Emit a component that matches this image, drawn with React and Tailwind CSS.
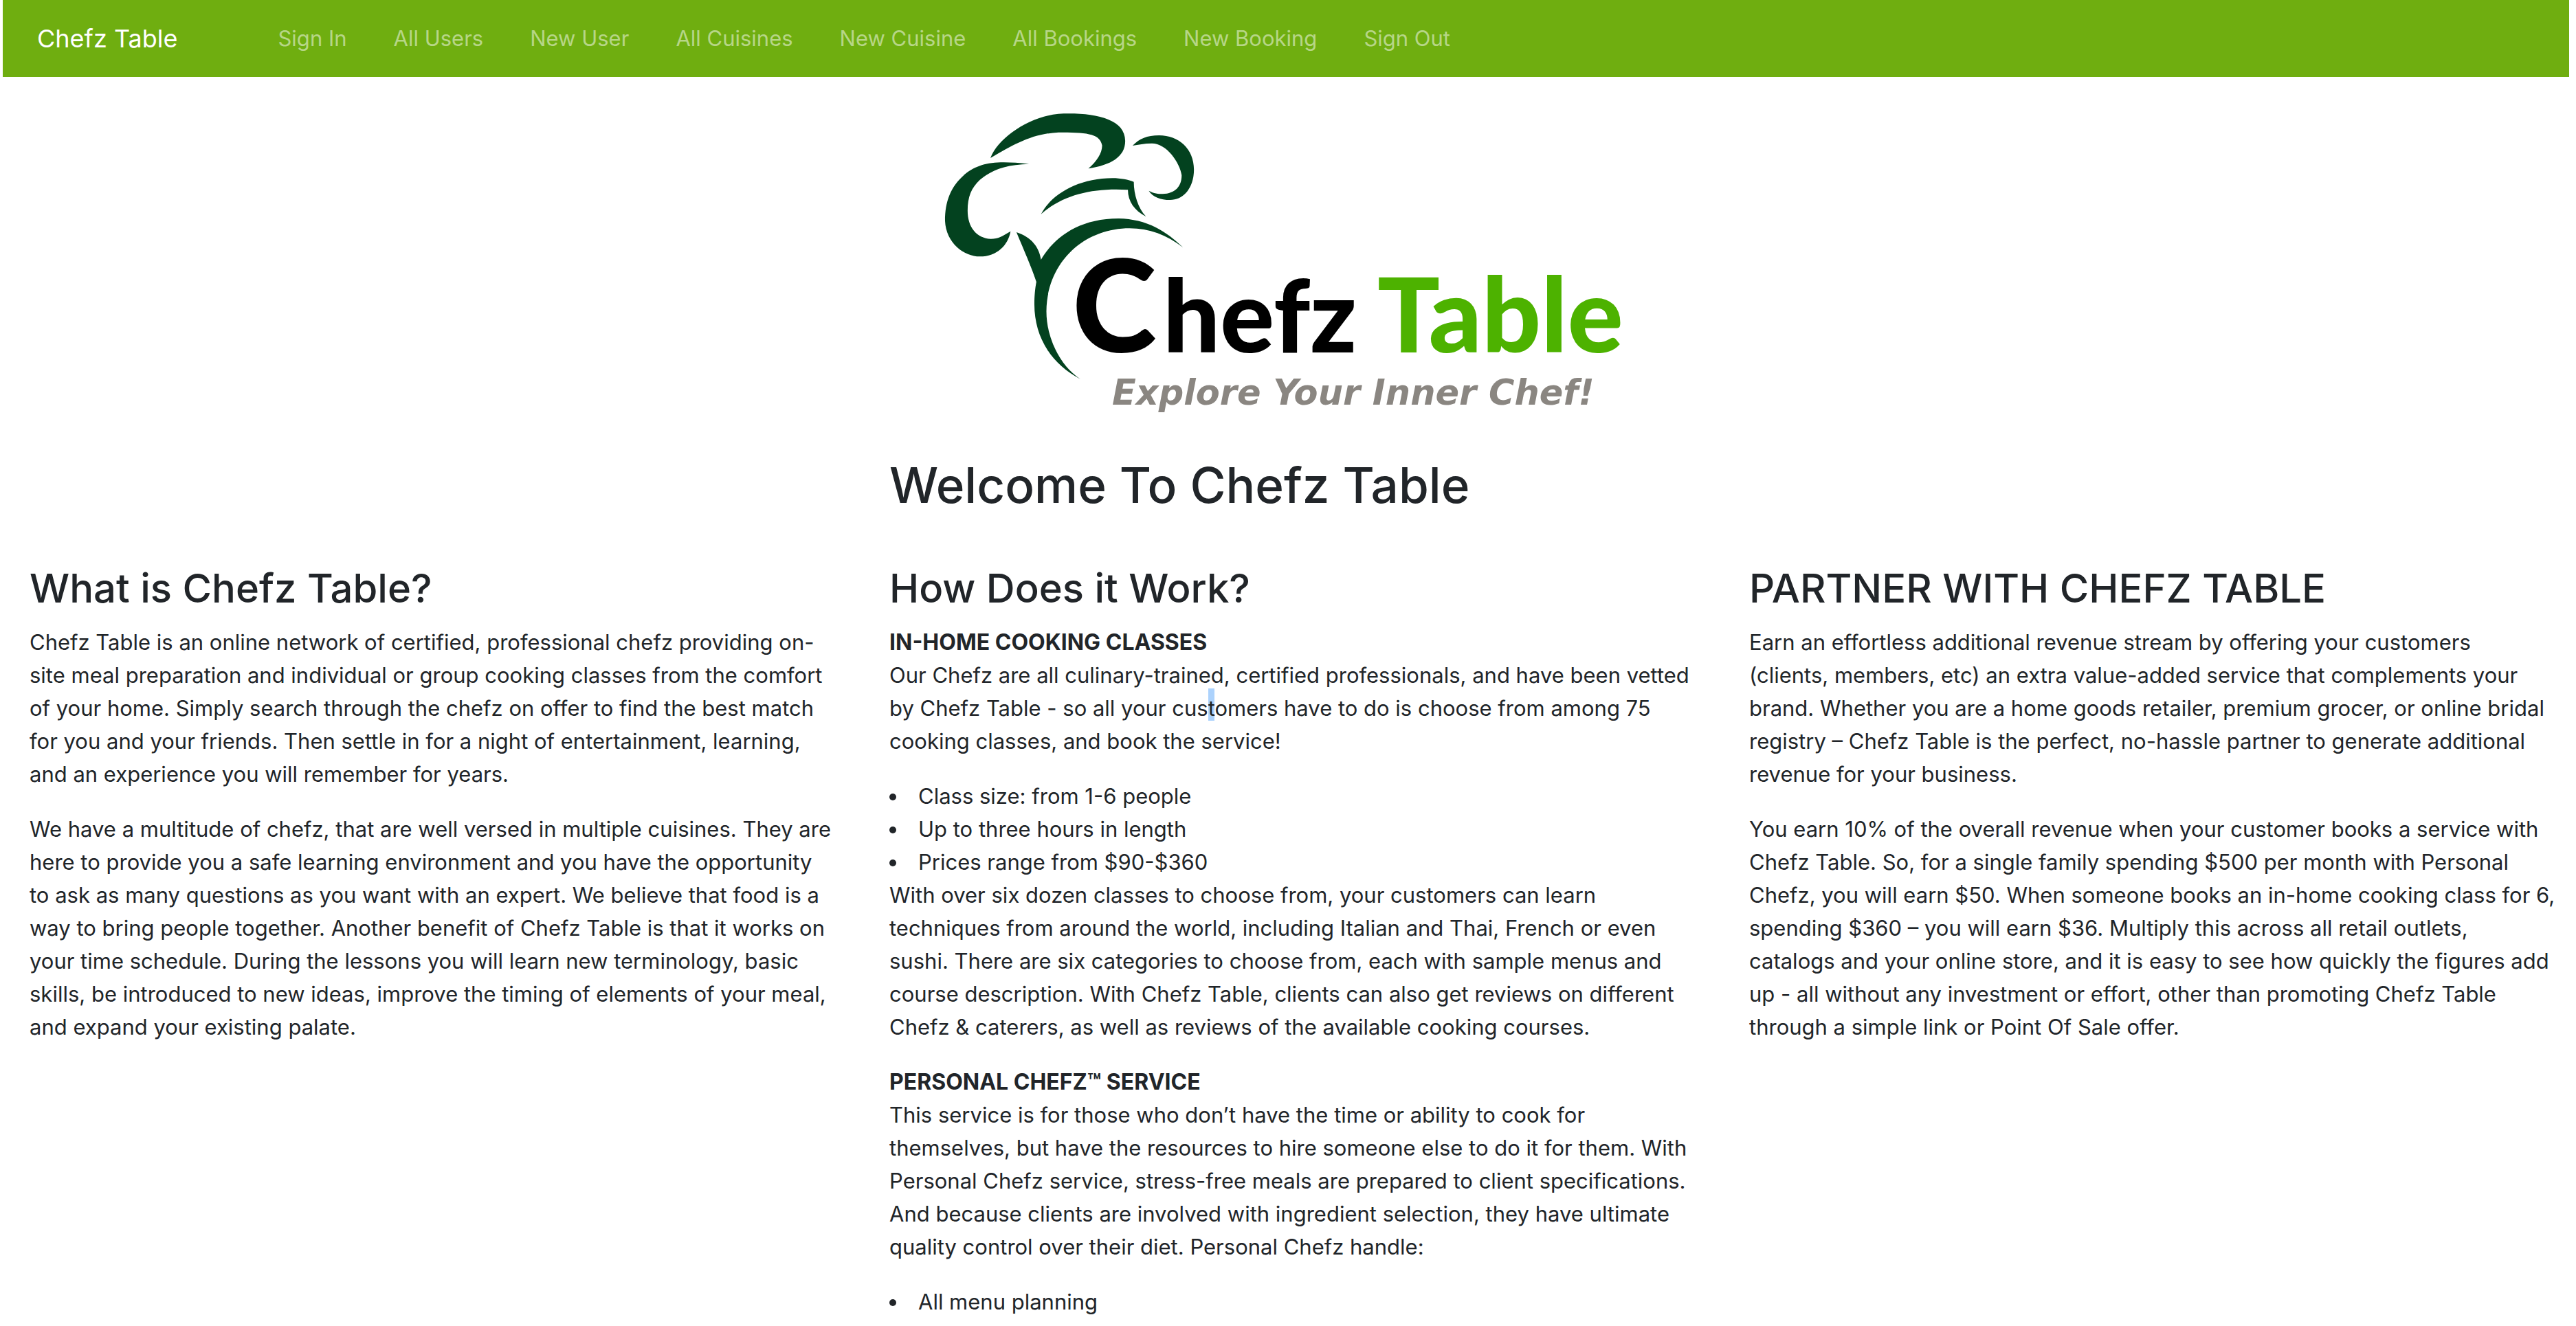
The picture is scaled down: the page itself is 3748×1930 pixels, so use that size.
const links = [
  'Sign In',
  'All Users',
  'New User',
  'All Cuisines',
  'New Cuisine',
  'All Bookings',
  'New Booking',
  'Sign Out',
];

function Navbar() {
  return (
    <nav className="ml-1 mr-[10px] flex h-28 items-center bg-[#6fae10] pl-[50px]">
      <a href="#home" className="mr-[146px] text-[36px] text-white">
        Chefz Table
      </a>
      <ul className="flex gap-[68px]">
        {links.map((label) => (
          <li key={label}>
            <a href="#nav" className="text-white/50">
              {label}
            </a>
          </li>
        ))}
      </ul>
    </nav>
  );
}

function Logo() {
  return (
    <svg viewBox="1294 112 1173 546" className="w-full" role="img" aria-label="Chefz Table logo">
      <g transform="translate(1340 140) scale(0.35714 0.33333)" fill="#03421f">
        <path d="M283 270C315 180 440 90 560 77C700 70 832 95 832 195C832 265 775 300 682 316C715 285 738 250 738 215C730 165 680 157 560 158C450 165 380 210 283 270Z" />
        <path d="M440 296C300 280 240 290 180 340C120 395 98 460 98 545C102 640 175 700 240 700C310 700 355 650 365 590C330 612 315 623 285 623C225 620 190 570 190 500C190 440 205 400 240 365C290 320 350 298 440 296Z" />
        <path d="M862 216C890 185 920 171 970 171C1050 171 1112 230 1112 320C1112 400 1070 453 1015 453C975 453 945 440 928 413C950 425 965 427 985 427C1035 425 1062 395 1062 345C1055 290 1000 205 940 206C910 206 885 212 862 216Z" />
        <path d="M489 515C530 430 640 358 780 358C815 358 845 365 867 374C867 430 885 490 917 526C870 500 843 460 843 409C700 400 580 430 489 515Z" />
        <path d="M389 594C450 615 482 660 489 714C540 620 640 534 805 534C920 536 1000 590 1068 661C1000 605 930 577 850 577C660 577 512 730 511 940C511 1060 570 1180 649 1235C530 1170 462 1050 462 910C462 870 465 840 470 811C450 745 420 675 389 594Z" />
      </g>
      <g className="font-['Lato',sans-serif] font-black">
        <text x="1560" y="513" fontSize="186" fill="#000">C</text>
        <text x="1692" y="513" fontSize="147" fill="#000">hefz</text>
        <text x="2004" y="513" fontSize="151" fill="#4db200">Table</text>
      </g>
      <text x="1618" y="589" fontSize="51" fill="#8a8681" className="font-['DejaVu_Sans',sans-serif] font-bold italic">
        Explore Your Inner Chef!
      </text>
    </svg>
  );
}

function Column({ title, children }) {
  return (
    <section>
      <h2 className="mb-4 text-[58px] leading-[77px] font-medium">{title}</h2>
      {children}
    </section>
  );
}

export default function App() {
  return (
    <div className="h-screen overflow-hidden bg-white font-['Inter','Liberation_Sans',sans-serif] text-[31px] leading-[48px] text-[#212529]">
      <Navbar />
      <main className="grid grid-cols-3 gap-x-[78px] pr-[30px] pl-[43px]">
        <header className="col-start-2 mb-16">
          <Logo />
          <h1 className="text-[71px] leading-[96px] font-medium">Welcome To Chefz Table</h1>
        </header>
        <div className="col-span-3 grid grid-cols-3 gap-x-[78px]">
          <Column title="What is Chefz Table?">
            <p className="mb-8">
              Chefz Table is an online network of certified, professional chefz providing on-site meal preparation and
              individual or group cooking classes from the comfort of your home. Simply search through the chefz on
              offer to find the best match for you and your friends. Then settle in for a night of entertainment,
              learning, and an experience you will remember for years.
            </p>
            <p className="mb-8">
              We have a multitude of chefz, that are well versed in multiple cuisines. They are here to provide you a
              safe learning environment and you have the opportunity to ask as many questions as you want with an
              expert. We believe that food is a way to bring people together. Another benefit of Chefz Table is that it
              works on your time schedule. During the lessons you will learn new terminology, basic skills, be
              introduced to new ideas, improve the timing of elements of your meal, and expand your existing palate.
            </p>
          </Column>
          <Column title="How Does it Work?">
            <h3 className="text-[32px] font-bold">IN-HOME COOKING CLASSES</h3>
            <p className="mb-8">
              Our Chefz are all culinary-trained, certified professionals, and have been vetted by Chefz Table - so all
              your cus<span className="bg-[#acd2fc] pt-[10px]">t</span>omers have to do is choose from among 75 cooking
              classes, and book the service!
            </p>
            <ul className="list-inside list-disc">
              <li>Class size: from 1-6 people</li>
              <li>Up to three hours in length</li>
              <li>Prices range from $90-$360</li>
            </ul>
            <p className="mb-8">
              With over six dozen classes to choose from, your customers can learn techniques from around the world,
              including Italian and Thai, French or even sushi. There are six categories to choose from, each with
              sample menus and course description. With Chefz Table, clients can also get reviews on different Chefz
              &amp; caterers, as well as reviews of the available cooking courses.
            </p>
            <h3 className="text-[32px] font-bold">PERSONAL CHEFZ™ SERVICE</h3>
            <p className="mb-8">
              This service is for those who don’t have the time or ability to cook for themselves, but have the
              resources to hire someone else to do it for them. With Personal Chefz service, stress-free meals are
              prepared to client specifications. And because clients are involved with ingredient selection, they have
              ultimate quality control over their diet. Personal Chefz handle:
            </p>
            <ul className="list-inside list-disc">
              <li>All menu planning</li>
            </ul>
          </Column>
          <Column title="PARTNER WITH CHEFZ TABLE">
            <p className="mb-8">
              Earn an effortless additional revenue stream by offering your customers (clients, members, etc) an extra
              value-added service that complements your brand. Whether you are a home goods retailer, premium grocer,
              or online bridal registry – Chefz Table is the perfect, no-hassle partner to generate additional revenue
              for your business.
            </p>
            <p className="mb-8">
              You earn 10% of the overall revenue when your customer books a service with Chefz Table. So, for a single
              family spending $500 per month with Personal Chefz, you will earn $50. When someone books an in-home
              cooking class for 6, spending $360 – you will earn $36. Multiply this across all retail outlets, catalogs
              and your online store, and it is easy to see how quickly the figures add up - all without any investment
              or effort, other than promoting Chefz Table through a simple link or Point Of Sale offer.
            </p>
          </Column>
        </div>
      </main>
    </div>
  );
}
